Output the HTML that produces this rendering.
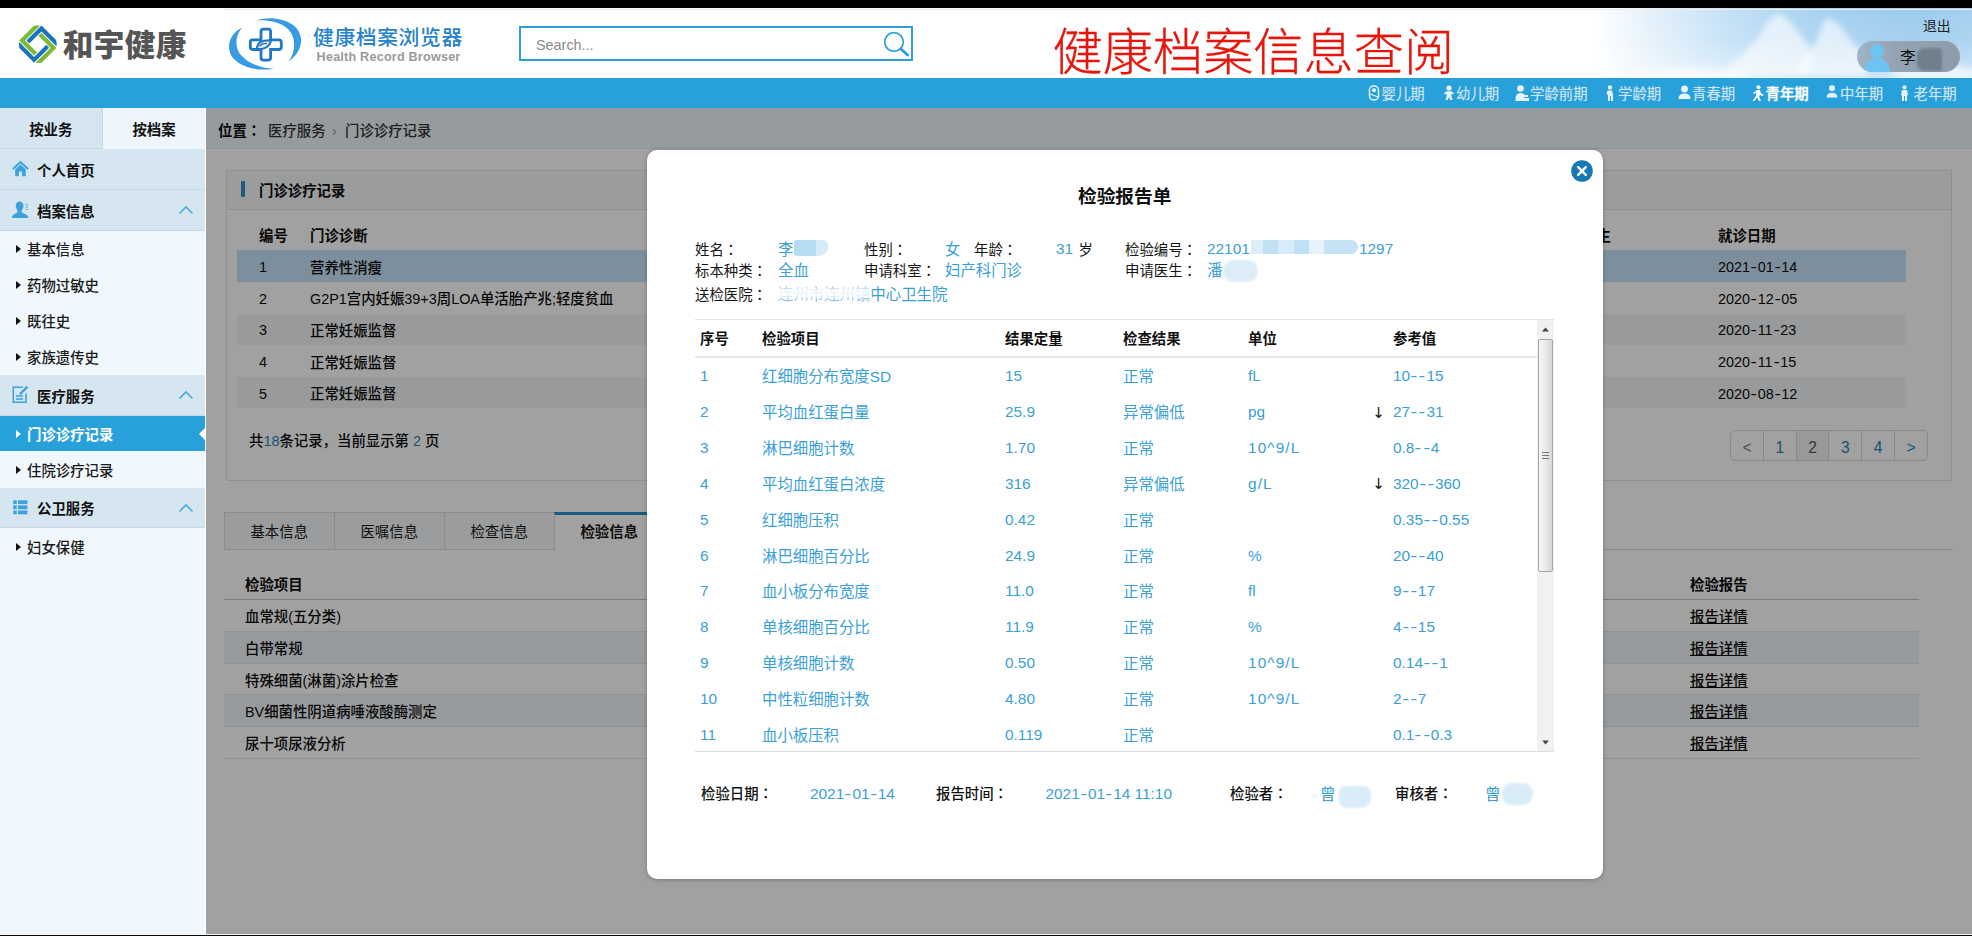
<!DOCTYPE html>
<html lang="zh-CN">
<head>
<meta charset="utf-8">
<title>健康档案浏览器</title>
<style>
*{box-sizing:border-box;margin:0;padding:0}
html,body{width:1972px;height:936px;overflow:hidden;background:#fff}
body{position:relative;font-family:"Liberation Sans","Noto Sans CJK SC",sans-serif;font-size:14.4px;color:#111}
.abs{position:absolute}
.y{display:inline-block;width:.53em;text-align:center;font-style:normal;transform:scaleX(1.35)}
.c{font-style:normal;line-height:0;font-family:"Noto Sans CJK JP","Noto Sans CJK TC",sans-serif}
.t{position:absolute;white-space:nowrap;line-height:20px;height:20px}
.b{font-weight:bold}
/* ---------- top ---------- */
#blacktop{left:0;top:0;width:1972px;height:8.5px;background:#000}
#header{left:0;top:8px;width:1972px;height:70px;background:#fff;overflow:hidden}
#sky{left:1580px;top:0;width:392px;height:70px;background:linear-gradient(180deg,rgba(255,255,255,0) 0%,rgba(255,255,255,.1) 45%,rgba(255,255,255,.5) 100%),linear-gradient(90deg,#ffffff 4%,#e4f1fb 18%,#c3e0f6 38%,#a6d1f1 62%,#9ccbee 85%,#a4d0f0 100%)}
#nav{left:0;top:77.5px;width:1972px;height:30.5px;background:#28a0da}
#bottomline{left:0;top:933.6px;width:1972px;height:2.4px;background:#0a0a0a;border-top:1.1px solid #f4f4f4}
#logo1txt{left:62.8px;top:13.9px;font-size:30.6px;line-height:46px;height:46px;font-weight:900;color:#555;letter-spacing:.4px}
#logo2cn{left:313px;top:15.2px;font-size:20.8px;line-height:30px;height:30px;color:#2682ca;font-weight:500;letter-spacing:.6px}
#logo2en{left:316.6px;top:40.4px;font-size:12.6px;line-height:18px;height:18px;color:#9a9a9a;font-weight:bold;letter-spacing:0.22px}
#search{left:519px;top:18.2px;width:394.3px;height:34.8px;border:2px solid #2a9fd8;background:#fff}
#search .t{left:15px;top:7px;font-size:14.4px;color:#8a8a8a}
#redtitle{left:1052.6px;top:10.1px;font-size:50.2px;line-height:70px;height:70px;color:#e8150d;font-weight:300;-webkit-text-stroke:.3px #e8150d}
#logout{left:1923px;top:9px;font-size:13.8px;color:#222}
#pill{left:1857px;top:32.5px;width:103px;height:31px;border-radius:16px;background:linear-gradient(90deg,#9fb4c6 0%,#92a3b3 40%,#8d9caa 100%);overflow:hidden}
#pill .t{left:43px;top:7px;font-size:15.6px;color:#111}
.nv{position:absolute;top:6px;height:20px;line-height:20px;font-size:14.4px;color:#cfe5f3;white-space:nowrap;text-shadow:0 0 1px rgba(255,255,255,.35)}
.nv.on{color:#fff;font-weight:500;-webkit-text-stroke:.3px #fff}
.ni{position:absolute;top:7px}
/* ---------- sidebar ---------- */
#side{left:0;top:108px;width:205px;height:826px;background:#f0f8fd;overflow:hidden}
.stab{position:absolute;top:0;height:41px;line-height:44px;text-align:center;font-weight:bold;font-size:14.4px;color:#111}
.sh{position:absolute;left:0;width:205.5px;height:41px;background:#d5e6f1;border-bottom:1px solid #c4d9e6}
.sh .t{left:37px;top:12px;font-weight:bold;font-size:14.4px}
.sh svg{position:absolute}
.si{position:absolute;left:0;width:205.5px;height:36px}
.si .t{left:27px;top:9px;font-size:14.4px;color:#1a1a1a;font-weight:500}
.si:before{content:"";position:absolute;left:16px;top:14px;border-left:5px solid #111;border-top:4px solid transparent;border-bottom:4px solid transparent}
.si.on{background:#28a0da}
.si.on .t{color:#fff;font-weight:bold}
.si.on:before{border-left-color:#fff}
.si.on:after{content:"";position:absolute;right:0;top:11px;border-right:7px solid #fff;border-top:7px solid transparent;border-bottom:7px solid transparent}
/* ---------- main (dimmed) ---------- */
#main{left:205.5px;top:108px;width:1766.5px;height:826px;background:#fff;overflow:hidden}
#main .t{color:#0c0c0c;font-size:14.4px;font-weight:500}
#main .t.b{font-weight:bold}
#main .d{letter-spacing:0}
#crumb{left:0;top:0;width:1766.5px;height:41px;background:#eef6fb;border-bottom:1px solid #dfe8ee}
#p1{left:20.5px;top:61.5px;width:1726px;height:311px;border:1px solid #e4e4e4;background:#fff}
#p1h{left:0;top:0;width:1724px;height:39.5px;background:#f6f7f8;border-bottom:1px solid #e2e2e2}
.r1{position:absolute;left:31.5px;width:1669px;height:31.6px}
.r1.sel{background:#c6e2f7}
.r1.odd{background:#f3f4f6}
.pg{position:absolute;top:0;height:30px;width:33px;line-height:33px;text-align:center;font-size:15.6px;color:#2e7fb5;border-left:1px solid #d4d9dd}
.tab2{position:absolute;top:404px;height:37.5px;width:110.5px;background:#f5f7f9;border:1px solid #d9dde0;line-height:38px;text-align:center;font-size:14.4px;color:#1a1a1a}
.r2{position:absolute;left:18.5px;width:1695px;height:31.8px;border-bottom:1px solid #e4e6e8}
.r2.ev{background:#f0f4f8}
#shade{left:205.5px;top:108px;width:1766.5px;height:826px;background:rgba(0,0,0,.37)}
/* ---------- modal ---------- */
#modal{left:646.8px;top:149.5px;width:956.4px;height:729px;background:#fff;border-radius:10px;box-shadow:0 1px 4px rgba(0,0,0,.25)}
#modal .t{font-size:14.4px;color:#151515;font-weight:400}
#modal .v{font-size:15.4px;color:#3a9fd6;font-weight:400}
#modal .n{letter-spacing:0}
#modal .u{letter-spacing:1.1px}
#modal .h{font-weight:bold;color:#111}
#modal .f{font-weight:500;color:#111}
.blob{position:absolute;background:#cfe7f6;border-radius:4px;filter:blur(1.2px)}
</style>
</head>
<body>
<div class="abs" id="blacktop"></div>
<div class="abs" id="header">
  <div class="abs" id="sky"></div>
  <div class="abs" style="left:224px;top:1px;width:1748px;height:1.2px;background:#eeeeee"></div>
  <svg class="abs" style="left:1580px;top:0" width="392" height="70" viewBox="1580 8 392 70">
    <defs><filter id="cb" x="-20%" y="-20%" width="140%" height="140%"><feGaussianBlur stdDeviation="3.2"/></filter></defs>
    <g filter="url(#cb)" fill="#fff" fill-opacity=".62">
      <path d="M1779 14 C1790 18 1796 30 1806 42 C1814 52 1812 70 1800 76 L1722 76 C1730 62 1748 52 1758 38 C1764 28 1770 16 1779 14 Z"/>
      <path d="M1829 18 C1840 22 1846 36 1858 48 C1868 58 1872 70 1866 76 L1796 76 C1800 62 1812 50 1818 38 C1821 28 1822 20 1829 18 Z"/>
      <ellipse cx="1935" cy="74" rx="45" ry="9"/>
      <ellipse cx="1690" cy="76" rx="60" ry="8"/>
    </g>
  </svg>
  <svg class="abs" style="left:0;top:-8px" width="80" height="80" viewBox="0 0 80 80">
    <g transform="translate(37.8,44.2) rotate(45)" stroke-width="1.4" stroke-linejoin="round">
      <path d="M-15.1 -10 L-12.3 -13.6 V7.1 H4.8 V9.9 H-15.1 Z" fill="#7cba33" stroke="#7cba33"/>
      <path d="M-15.1 -10 L-12.3 -13.6 V7.1 H4.8 V9.9 H-15.1 Z" fill="#1b74bb" stroke="#1b74bb" transform="rotate(90)"/>
      <path d="M-15.1 -10 L-12.3 -13.6 V7.1 H4.8 V9.9 H-15.1 Z" fill="#7cba33" stroke="#7cba33" transform="rotate(180)"/>
      <path d="M-15.1 -10 L-12.3 -13.6 V7.1 H4.8 V9.9 H-15.1 Z" fill="#1b74bb" stroke="#1b74bb" transform="rotate(270)"/>
    </g>
  </svg>
  <span class="t" id="logo1txt">和宇健康</span>
  <svg class="abs" style="left:0;top:-8px" width="320" height="80" viewBox="0 0 320 80">
    <path d="M242.2 27.4 C231 33 226 44 231 55 C237 66 256 72 274 68.7 C262 69 247 63 240 54 C234 45 236 34 242.2 27.4 Z" fill="#379be3"/>
    <path d="M256.8 20.4 C266 16.5 283 17.5 293 25 C304 33 305 50 288.4 61.7 C296 52 296 38 289 30 C281 22 268 20 256.8 20.4 Z" fill="#379be3"/>
    <path d="M263.4 29.1 h4.8 a2.4 2.4 0 0 1 2.4 2.4 v8.3 h8.3 a2.4 2.4 0 0 1 2.4 2.4 v4.9 a2.4 2.4 0 0 1 -2.4 2.4 h-8.3 v8.3 a2.4 2.4 0 0 1 -2.4 2.4 h-4.8 a2.4 2.4 0 0 1 -2.4 -2.4 v-8.3 h-8.3 a2.4 2.4 0 0 1 -2.4 -2.4 v-4.9 a2.4 2.4 0 0 1 2.4 -2.4 h8.3 v-8.3 a2.4 2.4 0 0 1 2.4 -2.4 Z" fill="none" stroke="#1f78c4" stroke-width="2.8"/>
    <path d="M257.2 46.6 C258 41.5 265 40.2 270.9 40.4 C270 46.5 263.5 50.3 257.6 48.6 C256.9 48 257 47.2 257.2 46.6 Z" fill="#fff" stroke="#1f78c4" stroke-width="2.2"/>
    <path d="M259.6 46.3 C261 44 264.5 43.4 267 43.6" fill="none" stroke="#1f78c4" stroke-width="1.6"/>
  </svg>
  <span class="t" id="logo2cn">健康档案浏览器</span>
  <span class="t" id="logo2en">Health Record Browser</span>
  <div class="abs" id="search"><span class="t">Search...</span>
    <svg class="abs" style="left:361px;top:2px" width="28" height="28" viewBox="0 0 28 28"><circle cx="12" cy="12" r="9.3" fill="none" stroke="#2a9fd8" stroke-width="1.7"/><path d="M18.8 18.8 L25.5 25" stroke="#2a9fd8" stroke-width="2.8" stroke-linecap="round"/></svg>
  </div>
  <span class="t" id="redtitle">健康档案信息查阅</span>
  <span class="t" id="logout">退出</span>
  <div class="abs" id="pill">
    <svg class="abs" style="left:5px;top:1px" width="30" height="30" viewBox="0 0 30 30"><circle cx="15" cy="9" r="7" fill="#6fc3f2"/><path d="M2 31 C2 20 9 16 15 16 C21 16 28 20 28 31 Z" fill="#6fc3f2"/></svg>
    <span class="t">李</span>
    <div class="abs" style="left:60px;top:7px;width:25px;height:23px;background:#717f8c;border-radius:8px 3px 3px 8px;filter:blur(1.2px)"></div>
  </div>
</div>
<div class="abs" id="nav">
  <svg class="ni" style="left:1368px" width="15" height="17" viewBox="0 0 15 17"><rect x="1.5" y="1" width="9" height="14" rx="4" fill="none" stroke="#e8f4fb" stroke-width="1.5"/><circle cx="6" cy="5.2" r="2" fill="#e8f4fb"/><path d="M2 9 L10 12" stroke="#e8f4fb" stroke-width="1.3"/></svg><span class="nv" style="left:1381.5px">婴儿期</span>
  <svg class="ni" style="left:1443px" width="15" height="17" viewBox="0 0 15 17"><circle cx="6" cy="3" r="2.6" fill="#e8f4fb"/><path d="M1 8 L4 6.2 H8 L11 8 L10 9.5 L8.3 8.7 V11 L9.5 15 H7.2 L6 12 L4.8 15 H2.5 L3.7 11 V8.7 L2 9.5 Z" fill="#e8f4fb"/></svg><span class="nv" style="left:1456px">幼儿期</span>
  <svg class="ni" style="left:1515px" width="15" height="17" viewBox="0 0 15 17"><circle cx="5.5" cy="3.5" r="3.3" fill="#e8f4fb"/><path d="M0.5 15 C0.5 10 2 8 5.5 8 C8 8 9 9 9.5 10 H13 V12 H9 V13 H14 V16 H0.5 Z" fill="#e8f4fb"/></svg><span class="nv" style="left:1530px">学龄前期</span>
  <svg class="ni" style="left:1605px" width="15" height="17" viewBox="0 0 15 17"><circle cx="5" cy="2.4" r="2.2" fill="#e8f4fb"/><path d="M2.5 5.5 H7 L8 10 V16 H6 V11 H5 V16 H3 V10 L1.5 9 Z" fill="#e8f4fb"/></svg><span class="nv" style="left:1618px">学龄期</span>
  <svg class="ni" style="left:1678px" width="15" height="17" viewBox="0 0 15 17"><circle cx="6.5" cy="4" r="3.4" fill="#e8f4fb"/><path d="M0.5 14 C0.5 10 3 8.5 6.5 8.5 C10 8.5 12.5 10 12.5 14 Z" fill="#e8f4fb"/></svg><span class="nv" style="left:1692px">青春期</span>
  <svg class="ni" style="left:1751px" width="15" height="17" viewBox="0 0 15 17"><circle cx="7.5" cy="2.2" r="2" fill="#fff"/><path d="M6 5 L9 5 L10 8.5 L12.5 9.5 L12 11 L8.8 10 L8.2 12 L10 16 H8 L6.3 12.5 L3.5 16 H1.5 L5 11 L5.2 7.5 L3 9 L2 8 Z" fill="#fff"/></svg><span class="nv on" style="left:1765.5px">青年期</span>
  <svg class="ni" style="left:1826px" width="15" height="17" viewBox="0 0 15 17"><circle cx="6" cy="3.3" r="3" fill="#e8f4fb"/><path d="M0.5 12.5 C0.5 9 3 8 6 8 C9 8 11.5 9 11.5 12.5 Z" fill="#e8f4fb"/></svg><span class="nv" style="left:1840px">中年期</span>
  <svg class="ni" style="left:1900px" width="15" height="17" viewBox="0 0 15 17"><circle cx="4.5" cy="2.3" r="2.1" fill="#e8f4fb"/><path d="M2 5 H7 L8 10 L7 10.5 V16 H5 V11 H4 V16 H2 V10.5 L1 10 Z" fill="#e8f4fb"/></svg><span class="nv" style="left:1913.5px">老年期</span>
</div>
<div class="abs" id="side">
  <div class="stab" style="left:0;width:102.5px;background:#d5e6f1;border-right:1px solid #c4d9e6;border-bottom:1px solid #c4d9e6">按业务</div>
  <div class="stab" style="left:102.5px;width:103px;background:#edf6fc">按档案</div>
  <div class="sh" style="top:41px"><svg style="left:12px;top:12px" width="17" height="16.2" viewBox="0 0 19 18"><path d="M1 9 L9.5 1.2 L18 9" fill="none" stroke="#3aa3dc" stroke-width="2.2" stroke-linejoin="miter"/><path d="M3.6 9.2 L9.5 4 L15.4 9.2 V17 H11.3 V11.6 H7.7 V17 H3.6 Z" fill="#3aa3dc"/></svg><span class="t">个人首页</span></div>
  <div class="sh" style="top:82px"><svg style="left:11px;top:10px" width="20" height="20" viewBox="0 0 20 20"><ellipse cx="8.6" cy="6" rx="3.9" ry="4.6" fill="#3aa3dc"/><path d="M1 18 C1 14.5 3.5 13.6 6.4 12.4 V9 H10.8 V12.4 C13.7 13.6 16.8 14.5 17.6 18 Z" fill="#3aa3dc"/><path d="M14.4 4.6 H17 M14.4 7 H17 M14.4 9.4 H17" stroke="#3aa3dc" stroke-width="1" stroke-opacity=".8"/></svg><span class="t">档案信息</span><svg style="left:178px;top:14px" width="16" height="12" viewBox="0 0 16 12"><path d="M1.5 9.5 L8 3 L14.5 9.5" fill="none" stroke="#4aa9de" stroke-width="1.6"/></svg></div>
  <div class="si" style="top:123px"><span class="t">基本信息</span></div>
  <div class="si" style="top:159px"><span class="t">药物过敏史</span></div>
  <div class="si" style="top:195px"><span class="t">既往史</span></div>
  <div class="si" style="top:231px"><span class="t">家族遗传史</span></div>
  <div class="sh" style="top:267px"><svg style="left:11px;top:10px" width="20" height="20" viewBox="0 0 20 20"><path d="M12 2.2 H2.3 V17.3 H15 V8.5" fill="none" stroke="#3aa3dc" stroke-width="1.5"/><path d="M5 11 H12 M5 14 H12" stroke="#3aa3dc" stroke-width="1.3"/><path d="M9 9.3 L16.4 1.6" stroke="#3aa3dc" stroke-width="2.3"/></svg><span class="t">医疗服务</span><svg style="left:178px;top:14px" width="16" height="12" viewBox="0 0 16 12"><path d="M1.5 9.5 L8 3 L14.5 9.5" fill="none" stroke="#4aa9de" stroke-width="1.6"/></svg></div>
  <div class="si on" style="top:308px;height:35px"><span class="t">门诊诊疗记录</span></div>
  <div class="si" style="top:344px"><span class="t">住院诊疗记录</span></div>
  <div class="sh" style="top:380px;height:40px"><svg style="left:12px;top:12px" width="18" height="16" viewBox="0 0 18 16"><g fill="#3aa3dc"><rect x="1.2" y="0.3" width="3.6" height="3.8"/><rect x="6" y="0.3" width="9.4" height="3.8"/><rect x="1.2" y="5.4" width="3.6" height="3.8"/><rect x="6" y="5.4" width="9.4" height="3.8"/><rect x="1.2" y="10.5" width="3.6" height="3.8"/><rect x="6" y="10.5" width="9.4" height="3.8"/></g></svg><span class="t" style="top:11px">公卫服务</span><svg style="left:178px;top:14px" width="16" height="12" viewBox="0 0 16 12"><path d="M1.5 9.5 L8 3 L14.5 9.5" fill="none" stroke="#4aa9de" stroke-width="1.6"/></svg></div>
  <div class="si" style="top:421px"><span class="t">妇女保健</span></div>
</div>
<div class="abs" id="main">
  <div class="abs" id="crumb"></div>
  <span class="t b" style="left:12.5px;top:13px;">位置<i class="c" lang="ja">：</i></span><span class="t" style="left:62.5px;top:13px;color:#333">医疗服务</span><span class="t" style="left:126.5px;top:13px;color:#999">›</span><span class="t" style="left:139.5px;top:13px;color:#333">门诊诊疗记录</span>
  <div class="abs" id="p1"><div class="abs" id="p1h"></div></div>
  <div class="abs" style="left:35.5px;top:73px;width:4px;height:15.5px;background:#2a8fd0;border-radius:1px"></div>
  <span class="t b" style="left:53.5px;top:73px;">门诊诊疗记录</span>
  <span class="t b" style="left:53.5px;top:118px;">编号</span><span class="t b" style="left:104.5px;top:118px;">门诊诊断</span><span class="t b" style="left:1376.5px;top:118px;">医生</span><span class="t b" style="left:1512.5px;top:118px;">就诊日期</span>
  <div class="r1 sel" style="top:142.3px"></div><span class="t d" style="left:53.5px;top:149px;">1</span><span class="t" style="left:104.5px;top:150px;">营养性消瘦</span><span class="t d" style="left:1512.5px;top:149px;">2021<i class="y">-</i>01<i class="y">-</i>14</span>
  <div class="r1" style="top:173.9px"></div><span class="t d" style="left:53.5px;top:181px;">2</span><span class="t" style="left:104.5px;top:181px;">G2P1宫内妊娠39+3周LOA单活胎产兆;轻度贫血</span><span class="t d" style="left:1512.5px;top:181px;">2020<i class="y">-</i>12<i class="y">-</i>05</span>
  <div class="r1 odd" style="top:205.5px"></div><span class="t d" style="left:53.5px;top:212px;">3</span><span class="t" style="left:104.5px;top:213px;">正常妊娠监督</span><span class="t d" style="left:1512.5px;top:212px;">2020<i class="y">-</i>11<i class="y">-</i>23</span>
  <div class="r1" style="top:237.1px"></div><span class="t d" style="left:53.5px;top:244px;">4</span><span class="t" style="left:104.5px;top:245px;">正常妊娠监督</span><span class="t d" style="left:1512.5px;top:244px;">2020<i class="y">-</i>11<i class="y">-</i>15</span>
  <div class="r1 odd" style="top:268.7px"></div><span class="t d" style="left:53.5px;top:276px;">5</span><span class="t" style="left:104.5px;top:276px;">正常妊娠监督</span><span class="t d" style="left:1512.5px;top:276px;">2020<i class="y">-</i>08<i class="y">-</i>12</span>
  <span class="t" style="left:43.5px;top:323px;">共<span style="color:#2e7fb5">18</span>条记录，当前显示第 <span style="color:#2e7fb5">2</span> 页</span>
  <div class="abs" style="left:1524.5px;top:322px;width:198px;height:31px;border:1px solid #d4d9dd;border-radius:5px;background:#fff;overflow:hidden"><span class="pg" style="left:-1.0px;color:#777">&lt;</span><span class="pg" style="left:31.8px;">1</span><span class="pg" style="left:64.6px;background:#f3f3f3;color:#555">2</span><span class="pg" style="left:97.4px;">3</span><span class="pg" style="left:130.2px;">4</span><span class="pg" style="left:163.0px;">&gt;</span></div>
  <div class="abs" style="left:18.5px;top:441px;width:1729px;height:1px;background:#d4d8db"></div>
  <div class="tab2" style="left:18.5px">基本信息</div>
  <div class="tab2" style="left:128.5px">医嘱信息</div>
  <div class="tab2" style="left:238.5px">检查信息</div>
  <div class="tab2" style="left:348.5px;background:#fff;border-top:3px solid #2a8fd0;border-bottom:1px solid #fff;font-weight:bold;line-height:34px;height:38.5px">检验信息</div>
  <span class="t b" style="left:39.5px;top:467px;">检验项目</span><span class="t b" style="left:1484.5px;top:467px;">检验报告</span>
  <div class="abs" style="left:18.5px;top:490.5px;width:1695px;height:1.5px;background:#b8c8d4"></div>
  <div class="r2" style="top:492.0px"></div><span class="t" style="left:39.5px;top:499px;">血常规(五分类)</span><span class="t" style="left:1484.5px;top:499px;text-decoration:underline">报告详情</span>
  <div class="r2 ev" style="top:523.8px"></div><span class="t" style="left:39.5px;top:531px;">白带常规</span><span class="t" style="left:1484.5px;top:531px;text-decoration:underline">报告详情</span>
  <div class="r2" style="top:555.6px"></div><span class="t" style="left:39.5px;top:563px;">特殊细菌(淋菌)涂片检查</span><span class="t" style="left:1484.5px;top:563px;text-decoration:underline">报告详情</span>
  <div class="r2 ev" style="top:587.4px"></div><span class="t" style="left:39.5px;top:594px;">BV细菌性阴道病唾液酸酶测定</span><span class="t" style="left:1484.5px;top:594px;text-decoration:underline">报告详情</span>
  <div class="r2" style="top:619.2px"></div><span class="t" style="left:39.5px;top:626px;">尿十项尿液分析</span><span class="t" style="left:1484.5px;top:626px;text-decoration:underline">报告详情</span>
</div>
<div class="abs" id="shade"></div>
<div class="abs" id="modal">
  <svg class="abs" style="left:923.2px;top:9.5px" width="24" height="24" viewBox="0 0 24 24"><circle cx="12" cy="12" r="10.8" fill="#1878b4"/><path d="M8.2 8.2 L15.8 15.8 M15.8 8.2 L8.2 15.8" stroke="#fff" stroke-width="2.4" stroke-linecap="round"/></svg>
  <span class="t h" style="left:431.2px;top:37.5px;font-size:18.7px;line-height:26px;height:26px;margin-top:-3px">检验报告单</span>
  <span class="t" style="left:48.2px;top:90.5px;">姓名<i class="c" lang="ja">：</i></span><span class="t v" style="left:131.2px;top:90.5px;">李</span><span class="t" style="left:217.2px;top:90.5px;">性别<i class="c" lang="ja">：</i></span><span class="t v" style="left:298.2px;top:90.5px;">女</span><span class="t" style="left:327.2px;top:90.5px;">年龄<i class="c" lang="ja">：</i></span><span class="t v n" style="left:409.2px;top:89.5px;">31</span><span class="t" style="left:431.7px;top:90.5px;">岁</span><span class="t" style="left:478.2px;top:90.5px;">检验编号<i class="c" lang="ja">：</i></span><span class="t v n" style="left:560.2px;top:89.5px;">22101</span><span class="t v n" style="left:712.2px;top:89.5px;">1297</span>
  <span class="t" style="left:48.2px;top:111.5px;">标本种类<i class="c" lang="ja">：</i></span><span class="t v" style="left:131.2px;top:111.5px;">全血</span><span class="t" style="left:217.2px;top:111.5px;">申请科室<i class="c" lang="ja">：</i></span><span class="t v" style="left:298.2px;top:111.5px;">妇产科门诊</span><span class="t" style="left:478.2px;top:111.5px;">申请医生<i class="c" lang="ja">：</i></span><span class="t v" style="left:560.2px;top:111.5px;">潘</span>
  <span class="t" style="left:48.2px;top:135.5px;">送检医院<i class="c" lang="ja">：</i></span><span class="t v" style="left:131.2px;top:135.5px;"><span style="color:#86c3ea;filter:blur(.5px)">连州市连州镇</span>中心卫生院</span>
  <div class="blob" style="left:147.2px;top:90.1px;width:22px;height:16.8px;background:#b6dcf3;border-radius:3px 0 0 3px;filter:blur(.6px)"></div><div class="blob" style="left:169.2px;top:90.1px;width:12px;height:16.8px;background:#d6eaf7;border-radius:0 5px 9px 0;filter:blur(.6px)"></div><div class="blob" style="left:130.2px;top:138.5px;width:94px;height:9.5px;background:rgba(255,255,255,.78);border-radius:2px;filter:blur(.9px)"></div><div class="blob" style="left:603.9px;top:90.1px;width:12.3px;height:14.7px;background:#deeef9;border-radius:0;filter:blur(.5px)"></div><div class="blob" style="left:616.2px;top:90.1px;width:15px;height:14.7px;background:#c0e0f5;border-radius:0;filter:blur(.5px)"></div><div class="blob" style="left:631.2px;top:90.1px;width:16px;height:14.7px;background:#d8ebf8;border-radius:0;filter:blur(.5px)"></div><div class="blob" style="left:647.2px;top:90.1px;width:15px;height:14.7px;background:#c0e0f5;border-radius:0;filter:blur(.5px)"></div><div class="blob" style="left:662.2px;top:90.1px;width:15px;height:14.7px;background:#e6f2fb;border-radius:0;filter:blur(.5px)"></div><div class="blob" style="left:677.2px;top:90.1px;width:34px;height:14.7px;background:#c6e3f6;border-radius:0 7px 7px 0;filter:blur(.5px)"></div><div class="blob" style="left:576.2px;top:110.5px;width:35px;height:21.5px;background:#dcedf8;border-radius:10px"></div><div class="blob" style="left:692.2px;top:636.5px;width:32px;height:22px;background:#d9ecf8;border-radius:6px 8px 10px 8px"></div><div class="blob" style="left:855.2px;top:633.5px;width:31px;height:22px;background:#d9ecf8;border-radius:10px"></div>
  <div class="abs" style="left:48.2px;top:169.5px;width:859px;height:432.5px;border-top:1px solid #e2e2e2;border-bottom:1px solid #dedede"></div>
  <div class="abs" style="left:48.2px;top:206.5px;width:842px;height:1.6px;background:#e7e7e7"></div>
  <span class="t h" style="left:53.2px;top:179.5px;">序号</span><span class="t h" style="left:115.2px;top:179.5px;">检验项目</span><span class="t h" style="left:358.2px;top:179.5px;">结果定量</span><span class="t h" style="left:476.2px;top:179.5px;">检查结果</span><span class="t h" style="left:601.2px;top:179.5px;">单位</span><span class="t h" style="left:746.2px;top:179.5px;">参考值</span>
  <span class="t v n" style="left:53.2px;top:216.5px;">1</span><span class="t v" style="left:115.2px;top:217.5px;">红细胞分布宽度SD</span><span class="t v n" style="left:358.2px;top:216.5px;">15</span><span class="t v" style="left:476.2px;top:217.5px;">正常</span><span class="t v n" style="left:601.2px;top:216.5px;">fL</span><span class="t v n" style="left:746.2px;top:216.5px;">10<i class="y">-</i><i class="y">-</i>15</span>
  <span class="t v n" style="left:53.2px;top:252.5px;">2</span><span class="t v" style="left:115.2px;top:253.5px;">平均血红蛋白量</span><span class="t v n" style="left:358.2px;top:252.5px;">25.9</span><span class="t v" style="left:476.2px;top:253.5px;">异常偏低</span><span class="t v n" style="left:601.2px;top:252.5px;">pg</span><span class="t" style="left:725.5px;top:253.5px;font-size:15px;color:#111;font-family:'DejaVu Sans',sans-serif">↓</span><span class="t v n" style="left:746.2px;top:252.5px;">27<i class="y">-</i><i class="y">-</i>31</span>
  <span class="t v n" style="left:53.2px;top:288.5px;">3</span><span class="t v" style="left:115.2px;top:289.5px;">淋巴细胞计数</span><span class="t v n" style="left:358.2px;top:288.5px;">1.70</span><span class="t v" style="left:476.2px;top:289.5px;">正常</span><span class="t v u" style="left:601.2px;top:288.5px;">10^9/L</span><span class="t v n" style="left:746.2px;top:288.5px;">0.8<i class="y">-</i><i class="y">-</i>4</span>
  <span class="t v n" style="left:53.2px;top:324.5px;">4</span><span class="t v" style="left:115.2px;top:325.5px;">平均血红蛋白浓度</span><span class="t v n" style="left:358.2px;top:324.5px;">316</span><span class="t v" style="left:476.2px;top:325.5px;">异常偏低</span><span class="t v u" style="left:601.2px;top:324.5px;">g/L</span><span class="t" style="left:725.5px;top:324.5px;font-size:15px;color:#111;font-family:'DejaVu Sans',sans-serif">↓</span><span class="t v n" style="left:746.2px;top:324.5px;">320<i class="y">-</i><i class="y">-</i>360</span>
  <span class="t v n" style="left:53.2px;top:360.5px;">5</span><span class="t v" style="left:115.2px;top:361.5px;">红细胞压积</span><span class="t v n" style="left:358.2px;top:360.5px;">0.42</span><span class="t v" style="left:476.2px;top:361.5px;">正常</span><span class="t v n" style="left:746.2px;top:360.5px;">0.35<i class="y">-</i><i class="y">-</i>0.55</span>
  <span class="t v n" style="left:53.2px;top:396.5px;">6</span><span class="t v" style="left:115.2px;top:397.5px;">淋巴细胞百分比</span><span class="t v n" style="left:358.2px;top:396.5px;">24.9</span><span class="t v" style="left:476.2px;top:397.5px;">正常</span><span class="t v n" style="left:601.2px;top:396.5px;">%</span><span class="t v n" style="left:746.2px;top:396.5px;">20<i class="y">-</i><i class="y">-</i>40</span>
  <span class="t v n" style="left:53.2px;top:431.5px;">7</span><span class="t v" style="left:115.2px;top:432.5px;">血小板分布宽度</span><span class="t v n" style="left:358.2px;top:431.5px;">11.0</span><span class="t v" style="left:476.2px;top:432.5px;">正常</span><span class="t v n" style="left:601.2px;top:431.5px;">fl</span><span class="t v n" style="left:746.2px;top:431.5px;">9<i class="y">-</i><i class="y">-</i>17</span>
  <span class="t v n" style="left:53.2px;top:467.5px;">8</span><span class="t v" style="left:115.2px;top:468.5px;">单核细胞百分比</span><span class="t v n" style="left:358.2px;top:467.5px;">11.9</span><span class="t v" style="left:476.2px;top:468.5px;">正常</span><span class="t v n" style="left:601.2px;top:467.5px;">%</span><span class="t v n" style="left:746.2px;top:467.5px;">4<i class="y">-</i><i class="y">-</i>15</span>
  <span class="t v n" style="left:53.2px;top:503.5px;">9</span><span class="t v" style="left:115.2px;top:504.5px;">单核细胞计数</span><span class="t v n" style="left:358.2px;top:503.5px;">0.50</span><span class="t v" style="left:476.2px;top:504.5px;">正常</span><span class="t v u" style="left:601.2px;top:503.5px;">10^9/L</span><span class="t v n" style="left:746.2px;top:503.5px;">0.14<i class="y">-</i><i class="y">-</i>1</span>
  <span class="t v n" style="left:53.2px;top:539.5px;">10</span><span class="t v" style="left:115.2px;top:540.5px;">中性粒细胞计数</span><span class="t v n" style="left:358.2px;top:539.5px;">4.80</span><span class="t v" style="left:476.2px;top:540.5px;">正常</span><span class="t v u" style="left:601.2px;top:539.5px;">10^9/L</span><span class="t v n" style="left:746.2px;top:539.5px;">2<i class="y">-</i><i class="y">-</i>7</span>
  <span class="t v n" style="left:53.2px;top:575.5px;">11</span><span class="t v" style="left:115.2px;top:576.5px;">血小板压积</span><span class="t v n" style="left:358.2px;top:575.5px;">0.119</span><span class="t v" style="left:476.2px;top:576.5px;">正常</span><span class="t v n" style="left:746.2px;top:575.5px;">0.1<i class="y">-</i><i class="y">-</i>0.3</span>
  <div class="abs" style="left:890.7px;top:170.5px;width:16.5px;height:431px;background:#f1f1f1"></div>
  <div class="abs" style="left:891.2px;top:189.0px;width:15.5px;height:233.5px;border:1px solid #a6a6a6;border-radius:2px;background:linear-gradient(90deg,#f6f6f6 0%,#ebebeb 45%,#d6d6d6 100%)"></div>
  <svg class="abs" style="left:890.7px;top:170.5px" width="17" height="431" viewBox="0 0 17 431"><path d="M5 11.5 L8.5 7.5 L12 11.5 Z" fill="#444"/><path d="M5.2 420.5 L8.5 424.5 L11.8 420.5 Z" fill="#444"/><path d="M5 132.5 H12 M5 135.5 H12 M5 138.5 H12" stroke="#777" stroke-width="1"/></svg>
  <span class="t f" style="left:54.2px;top:634.5px;">检验日期<i class="c" lang="ja">：</i></span><span class="t v n" style="left:163.2px;top:634.5px;">2021<i class="y">-</i>01<i class="y">-</i>14</span><span class="t f" style="left:289.2px;top:634.5px;">报告时间<i class="c" lang="ja">：</i></span><span class="t v n" style="left:398.7px;top:634.5px;">2021<i class="y">-</i>01<i class="y">-</i>14 11:10</span><span class="t f" style="left:583.2px;top:634.5px;">检验者<i class="c" lang="ja">：</i></span><span class="t v" style="left:673.2px;top:635.5px;">曾</span><span class="t f" style="left:748.2px;top:634.5px;">审核者<i class="c" lang="ja">：</i></span><span class="t v" style="left:838.2px;top:635.5px;">曾</span>
</div>
<div class="abs" id="bottomline"></div>
</body>
</html>
